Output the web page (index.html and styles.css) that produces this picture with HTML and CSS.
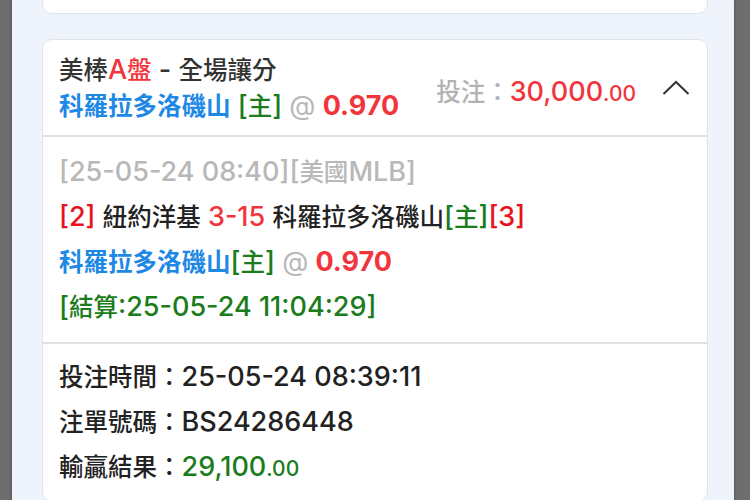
FILE: index.html
```html
<!DOCTYPE html>
<html lang="zh-Hant">
<head>
    <meta charset="UTF-8">
    <meta name="viewport" content="width=device-width, initial-scale=1.0">
    <title>注單詳情</title>
    <link rel="stylesheet" href="styles.css">
</head>
<body>
    <div class="panel">
        <div class="card card-prev"></div>

        <div class="card bet">
            <div class="bet-head">
                <div class="bet-title">
                    <div class="market">美棒<span class="red"><span class="en">A</span>盤</span><span class="en"> - </span>全場讓分</div>
                    <div class="pick">
                        <span class="team">科羅拉多洛磯山</span><span class="en"> </span><span class="home"><span class="en">[</span>主<span class="en">]</span></span><span class="en"> <span class="at">@</span> <span class="odds">0.970</span></span>
                    </div>
                </div>
                <div class="stake">
                    <span class="stake-label">投注：</span><span class="amount en">30,000<small>.00</small></span>
                </div>
                <svg class="chevron" width="28" height="16" viewBox="0 0 28 16">
                    <polyline points="1.5,14 14,2 26.5,14" fill="none" stroke="#333" stroke-width="2"/>
                </svg>
            </div>

            <div class="bet-detail">
                <p class="muted"><span class="en">[25-05-24 08:40][</span>美國<span class="en">MLB]</span></p>
                <p><span class="bracket en">[2]</span><span class="en"> </span>紐約洋基<span class="en"> <span class="score">3-15</span> </span>科羅拉多洛磯山<span class="home"><span class="en">[</span>主<span class="en">]</span></span><span class="bracket en">[3]</span></p>
                <p><span class="team">科羅拉多洛磯山</span><span class="home"><span class="en">[</span>主<span class="en">]</span></span><span class="en"> <span class="at">@</span> <span class="odds">0.970</span></span></p>
                <p class="settle"><span class="en">[</span>結算<span class="en">:25-05-24 11:04:29]</span></p>
            </div>

            <div class="bet-info">
                <p>投注時間：<span class="en">25-05-24 08:39:11</span></p>
                <p>注單號碼：<span class="en">BS24286448</span></p>
                <p>輸贏結果：<span class="win en">29,100<small>.00</small></span></p>
            </div>
        </div>
    </div>
</body>
</html>
```

FILE: styles.css
```css
* {
    margin: 0;
    padding: 0;
    box-sizing: border-box;
}

body {
    background: #6e6e6e;
    font-family: Inter, "Noto Sans CJK TC", sans-serif;
    font-size: 24.5px;
    font-weight: 500;
    color: #222;
    height: 500px;
    overflow: hidden;
}

/* latin runs render larger than the CJK ones */
.en {
    font-size: 27px;
    line-height: 1;
}

.panel {
    margin: 0 16px 0 12px;
    height: 500px;
    background: #eef3fc;
    padding: 0 26px 0 30px;
    box-shadow: 0 0 3px rgba(0, 0, 0, 0.35);
    overflow: hidden;
}

.card {
    background: #fff;
    border: 1px solid #dfe3ea;
    border-radius: 10px;
}

.card-prev {
    height: 34px;
    margin-top: -20px;
    margin-bottom: 25px;
}

.bet-head {
    display: flex;
    align-items: center;
    padding: 12px 17px 11px 16px;
    border-bottom: 2px solid #e0e0e0;
}

.bet-title {
    flex: 1;
    line-height: 36px;
    white-space: nowrap;
}

.market {
    color: #333;
}

.red {
    color: #f2353d;
}

.team {
    color: #1e88e5;
    font-weight: 700;
}

.home {
    color: #1b7c1b;
}

.at {
    color: #b8b8b8;
    font-weight: 400;
}

.odds {
    color: #f2353d;
    font-weight: 700;
}

.stake {
    margin-top: 4px;
    margin-right: 26px;
    white-space: nowrap;
}

.stake-label {
    color: #b3b3b3;
}

.amount {
    color: #f2353d;
}

small {
    font-size: 21px;
}

.bet-detail {
    padding: 13px 16px 12px;
    border-bottom: 2px solid #e0e0e0;
}

.bet-detail p,
.bet-info p {
    line-height: 45px;
    white-space: nowrap;
}

.muted {
    color: #b8b8b8;
}

.bracket {
    color: #e8121c;
}

.score {
    color: #f2353d;
}

.settle {
    color: #1b7c1b;
}

.bet-info {
    padding: 11px 16px;
}

.win {
    color: #1b7c1b;
}
```
